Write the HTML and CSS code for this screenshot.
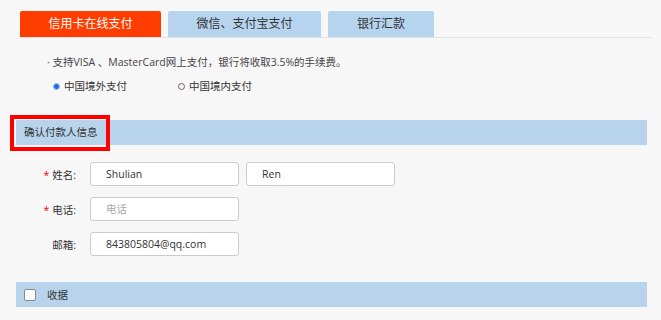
FILE: index.html
```html
<!DOCTYPE html>
<html lang="zh-CN">
<head>
    <meta charset="UTF-8">
    <title>支付方式</title>
    <link rel="stylesheet" href="styles.css">
</head>
<body>
    <div class="page">
        <div class="tabs">
            <div class="tab tab-active">信用卡在线支付</div>
            <div class="tab tab-wide">微信、支付宝支付</div>
            <div class="tab tab-small">银行汇款</div>
        </div>

        <div class="note">· 支持VISA 、MasterCard网上支付，银行将收取3.5%的手续费。</div>

        <div class="radios">
            <label class="radio"><span class="dot dot-on"></span>中国境外支付</label>
            <label class="radio"><span class="dot"></span>中国境内支付</label>
        </div>

        <div class="section">
            <div class="section-bar">确认付款人信息</div>
            <div class="highlight"></div>
        </div>

        <div class="form">
            <div class="row">
                <div class="label"><span class="star">*</span>姓名:</div>
                <div class="input">Shulian</div>
                <div class="input">Ren</div>
            </div>
            <div class="row">
                <div class="label"><span class="star">*</span>电话:</div>
                <div class="input placeholder">电话</div>
            </div>
            <div class="row">
                <div class="label">邮箱:</div>
                <div class="input">843805804@qq.com</div>
            </div>
        </div>

        <div class="receipt-bar">
            <span class="checkbox"></span>收据
        </div>
    </div>
</body>
</html>
```

FILE: styles.css
```css
body {
    margin: 0;
    background: #f7f7f7;
    font-family: "Open Sans", "Noto Sans CJK SC", sans-serif;
    font-size: 10.5px;
    color: #333;
}
.page {
    width: 661px;
    height: 320px;
    padding-top: 11px;
    box-sizing: border-box;
}
.tabs {
    display: flex;
    gap: 7px;
    margin-left: 20px;
    width: 631px;
    border-bottom: 1px solid #e2e2e2;
}
.tab {
    height: 26px;
    line-height: 26px;
    width: 141px;
    text-align: center;
    font-size: 12px;
    background: #b7d4ee;
    color: #333;
    border-radius: 2px 2px 0 0;
}
.tab-active {
    background: #ff3d00;
    color: #fff;
}
.tab-wide {
    width: 153px;
}
.tab-small {
    width: 106px;
}
.note {
    margin: 16px 0 0 47px;
    line-height: 16px;
    color: #444;
}
.radios {
    display: flex;
    margin: 8px 0 0 53px;
    line-height: 16px;
}
.radio {
    display: flex;
    align-items: center;
    width: 125px;
}
.dot {
    width: 5px;
    height: 5px;
    border: 1px solid #666;
    border-radius: 50%;
    margin-right: 4px;
    box-sizing: content-box;
}
.dot-on {
    background: #1a6fe0;
    border-color: #9cc0ee;
}
.section {
    position: relative;
    margin: 26px 0 0 16px;
    width: 631px;
}
.section-bar {
    height: 25px;
    line-height: 25px;
    padding-left: 8px;
    background: #b7d4ec;
    color: #333;
}
.highlight {
    position: absolute;
    left: -6px;
    top: -5px;
    width: 100px;
    height: 36px;
    border: 4px solid #f00;
    box-sizing: border-box;
}
.form {
    display: flex;
    flex-direction: column;
    gap: 11px;
    margin-top: 17px;
}
.row {
    display: flex;
    align-items: center;
    gap: 7px;
}
.label {
    width: 76px;
    text-align: right;
    padding-right: 7px;
    box-sizing: border-box;
    margin-left: 7px;
}
.star {
    color: #e00;
    margin-right: 3px;
}
.input {
    width: 149px;
    height: 24px;
    line-height: 22px;
    padding-left: 15px;
    box-sizing: border-box;
    background: #fff;
    border: 1px solid #ccc;
    border-radius: 3px;
    color: #333;
}
.placeholder {
    color: #aaa;
}
.receipt-bar {
    display: flex;
    align-items: center;
    margin: 26px 0 0 16px;
    width: 631px;
    height: 25px;
    padding-left: 8px;
    box-sizing: border-box;
    background: #b7d4ec;
}
.checkbox {
    width: 10px;
    height: 10px;
    background: #fff;
    border: 1px solid #888;
    border-radius: 2px;
    margin-right: 11px;
}
```
